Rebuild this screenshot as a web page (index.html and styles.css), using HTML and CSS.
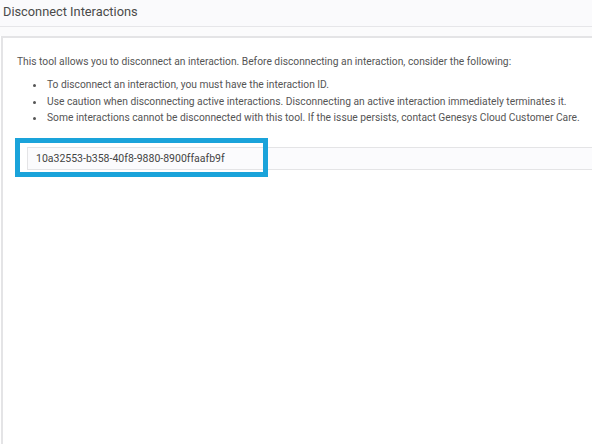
FILE: index.html
```html
<!DOCTYPE html>
<html>
<head>
<meta charset="utf-8">
<link rel="stylesheet" href="styles.css">
</head>
<body>
<div class="page">
  <header class="header"><h1 class="title">Disconnect Interactions</h1></header>
  <div class="band"></div>
  <section class="panel">
    <p class="intro">This tool allows you to disconnect an interaction. Before disconnecting an interaction, consider the following:</p>
    <ul class="list">
      <li>To disconnect an interaction, you must have the interaction ID.</li>
      <li>Use caution when disconnecting active interactions. Disconnecting an active interaction immediately terminates it.</li>
      <li>Some interactions cannot be disconnected with this tool. If the issue persists, contact Genesys Cloud Customer Care.</li>
    </ul>
    <div class="field">
      <div class="input">10a32553-b358-40f8-9880-8900ffaafb9f</div>
      <div class="highlight"></div>
    </div>
  </section>
</div>
</body>
</html>
```
FILE: styles.css
```css
html, body { margin: 0; padding: 0; background: #fff; }
body { font-family: Roboto, "Liberation Sans", sans-serif; color: #555; width: 592px; height: 444px; overflow: hidden; }
.page { display: flex; flex-direction: column; height: 444px; }
.header { height: 26px; background: #fafafc; border-bottom: 1px solid #e6e6e9; display: flex; align-items: center; padding-left: 3px; }
.title { margin: 0; font-size: 12.8px; font-weight: 400; color: #4a4a4a; position: relative; top: -2px; }
.band { height: 9px; background: #fbfbfc; }
.panel { flex: 1; margin-left: 1px; border-top: 2px solid #e4e4e6; border-left: 2px solid #e4e4e6; background: #fff; padding: 16px 0 0 14px; }
.intro { margin: 0; font-size: 10.25px; line-height: 16px; color: #555; white-space: nowrap; }
.list { margin: 7px 0 0 0; padding-left: 29px; font-size: 10.25px; line-height: 16.5px; color: #555; white-space: nowrap; }
.list li { padding-left: 1px; }
.field { position: relative; margin-top: 20px; margin-left: 10px; }
.input { height: 21px; border: 1px solid #e4e4e6; border-right: none; background: #fbfbfd; font-size: 10.5px; line-height: 21px; padding-left: 8px; color: #444; }
.highlight { position: absolute; left: -12px; top: -9px; width: 243px; height: 29px; border: 5px solid #1aa3da; }
```
